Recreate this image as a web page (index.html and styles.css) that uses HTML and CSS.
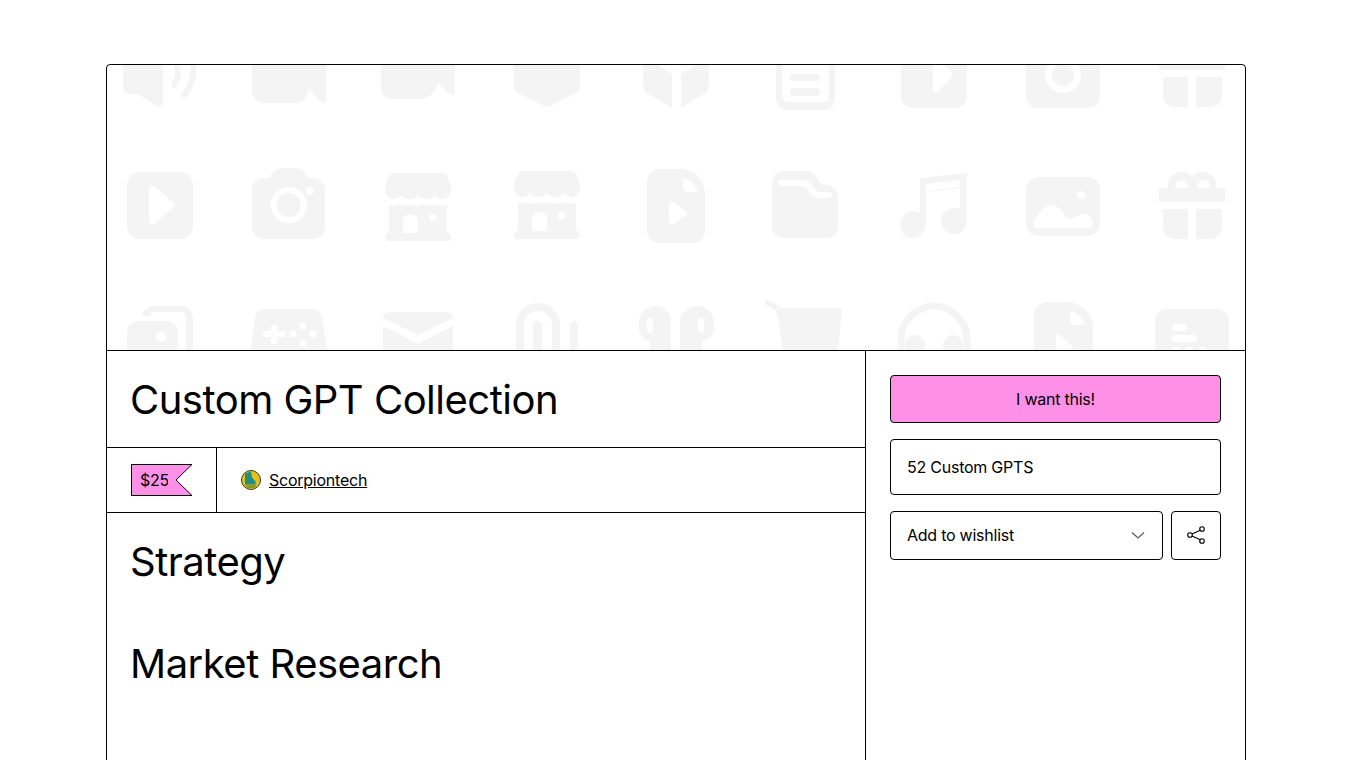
FILE: index.html
```html
<!DOCTYPE html>
<html lang="en">
<head>
    <meta charset="UTF-8">
    <meta name="viewport" content="width=device-width, initial-scale=1.0">
    <title>Custom GPT Collection</title>
    <link rel="stylesheet" href="styles.css">
</head>
<body>
    <article class="product">
        <div class="cover">
            <svg class="cover-art" viewBox="107 65 1138 285" aria-hidden="true">
                <defs>
                    <g id="gift">
                        <path d="M1168 188c-2-9 5-16 14-16 5 0 8 2 10 5 2-3 5-5 10-5 9 0 16 7 14 16h9v14h-66v-14z"/>
                        <path d="M1163 209h25v30h-13c-7 0-12-5-12-12zM1196 209h26v18c0 7-5 12-12 12h-14z"/>
                        <path class="gap" d="M1175 188c0-5 3-8 6.500-8s6.500 3 6.500 8zM1197 188c0-5 3-8 6.500-8s6.500 3 6.500 8z"/>
                    </g>
                    <g id="store">
                        <path d="M395 173h46c3 0 5 1 6 3l4 9v5c0 5-4 9-8 9-3 0-6-1-8-4-2 3-5 4-8 4s-6-1-9-4c-2 3-5 4-9 4-3 0-6-1-8-4-2 3-5 4-8 4-4 0-8-4-8-9v-5l4-9c1-2 3-3 6-3z"/>
                        <path d="M389 205c3 1 7 1 10-1 3 2 8 2 12 0 3 2 8 2 12 0 3 2 8 2 12 0 3 2 8 2 12 1v28h1c2 0 3 2 3 4s-1 4-3 4h-60c-2 0-3-2-3-4s1-4 3-4h1z"/>
                        <path class="gap" d="M403 233v-12c0-4 3-7 7.500-7s7.500 3 7.500 7v12z"/>
                        <circle class="gap" cx="432.700" cy="217.700" r="3.700"/>
                    </g>
                    <g id="camera">
                        <path d="M270 178c2-6 6-10 12-10h13c6 0 10 4 12 10h6c7 0 12 5 12 12v37c0 7-5 12-12 12h-49c-7 0-12-5-12-12v-37c0-7 5-12 12-12z"/>
                        <circle class="gap" cx="288.700" cy="205" r="18"/>
                        <circle cx="288.700" cy="205" r="12"/>
                        <circle class="gap" cx="310" cy="190.700" r="4"/>
                    </g>
                    <g id="file-play">
                        <path d="M660 169h20c14 0 25 11 25 25v37c0 7-5 12-12 12h-34c-7 0-12-5-12-12v-50c0-7 6-12 13-12z"/>
                        <path class="gap" d="M683 178c8 2 13 7 15 14h-11c-2 0-4-2-4-4z"/>
                        <path class="gap" d="M669 205c0-3 3-4 5-3l12 10c1 1 1 2 0 3l-12 9c-2 1-5 0-5-3z"/>
                    </g>
                </defs>

                <!-- row 1 -->
                <path d="M123 65h40v38c0 3-3 4-6 3l-19-12h-8c-4 0-7-3-7-7z"/>
                <path class="arc" d="M177 67c2 6 0 13-3 18M193 67c1 11-3 21-9 28"/>
                <path d="M252 65h74v35c0 3-3 4-5 2l-12-13c-2 8-7 14-14 14h-31c-7 0-12-5-12-12z"/>
                <path d="M381 65h74v28c0 2-3 3-5 1l-12-11c-2 9-9 16-19 16h-26c-7 0-12-5-12-12z"/>
                <path d="M514 65h66v22c0 3-2 5-4 6l-26 13c-2 1-4 1-6 0l-26-13c-2-1-4-3-4-6z"/>
                <path d="M643 65h14l15 9v34l-22-13c-4-2-7-5-7-10zM681 74l15-9h13v20c0 5-3 8-7 10l-21 13z"/>
                <path d="M776 65h59v33c0 7-5 12-12 12h-35c-7 0-12-5-12-12z"/>
                <path class="gap" d="M782 65h47v31c0 3-3 6-6 6h-35c-3 0-6-3-6-6z"/>
                <rect x="790" y="74" width="30" height="7" rx="3.500"/>
                <rect x="790" y="88" width="30" height="8" rx="4"/>
                <path d="M901 65h66v31c0 7-5 12-12 12h-42c-7 0-12-5-12-12z"/>
                <path class="gap" d="M933 65v25c0 3 2 4 4 2l15-15c1-1 1-3 0-4l-8-8z"/>
                <path d="M1026 65h74v31c0 7-5 12-12 12h-50c-7 0-12-5-12-12z"/>
                <circle class="gap" cx="1063" cy="75" r="18"/>
                <circle cx="1063" cy="75" r="11"/>
                <use href="#gift" y="-132"/>

                <!-- row 2 -->
                <rect x="127" y="172" width="66" height="67" rx="13"/>
                <path class="gap" d="M149 190c0-4 3-5 6-3l19 16c1 1 1 3 0 4l-19 16c-3 2-6 1-6-3z"/>
                <use href="#camera"/>
                <use href="#store"/>
                <use href="#store" x="129" y="-2"/>
                <use href="#file-play"/>
                <path d="M772 183c0-7 5-12 12-12h22c6 0 9 3 11 7 2 4 4 7 9 7 7 0 12 5 12 12v29c0 7-5 12-12 12h-42c-7 0-12-5-12-12z"/>
                <path class="line" d="M781 183h21c5 0 7 3 9 6 2 4 5 6 9 6h9"/>
                <path d="M920 178l47-5v48c0 7-6 13-13 13s-13-6-13-13 6-13 13-13c2 0 4 0 6 1v-21l-34 4v32c0 7-6 14-13 14s-13-6-13-13 6-14 13-14c2 0 4 0 7 2z"/>
                <path class="gap" d="M926 184l34-4v7l-34 4z"/>
                <rect x="1026" y="177" width="74" height="59" rx="13"/>
                <path class="gap" d="M1034 222c3-7 10-17 18-17 6 0 9 5 13 11 2 3 5 4 8 2l6-3c5-2 11-1 13 5 1 4 0 8-4 8h-52c-2 0-3-4-2-6z"/>
                <circle class="gap" cx="1081" cy="195" r="4"/>
                <use href="#gift"/>

                <!-- row 3 -->
                <path d="M155 306h26c7 0 12 5 12 12v35h-7v-36c0-3-2-5-5-5h-26c-3 0-5 1-5 4h-8c0-5 6-10 13-10z"/>
                <path d="M139 321h27c7 0 12 5 12 12v20h-51v-20c0-7 5-12 12-12z"/>
                <circle class="gap" cx="161" cy="337" r="5"/>
                <path d="M265 309h46c6 0 10 3 11 9l6 35h-78l5-35c1-6 5-9 10-9z"/>
                <path class="gap" d="M271 325h6v6h8v6h-8v7h-6v-7h-8v-6h8z"/>
                <circle class="gap" cx="303" cy="326" r="3.500"/>
                <circle class="gap" cx="293" cy="334" r="3.500"/>
                <circle class="gap" cx="313" cy="334" r="3.500"/>
                <circle class="gap" cx="303" cy="343" r="3.500"/>
                <path d="M393 312h50c6 0 10 2 10 6l-35 17-35-17c0-4 4-6 10-6z"/>
                <path d="M383 326l35 18 35-18v27h-70z"/>
                <path class="arc wide clip" d="M520 353v-28c0-10 8-18 18-18s18 8 18 18v28"/>
                <path d="M533 353v-27c0-3 2-5 4.500-5s4.500 2 4.500 5v27zM570 353v-27c0-3 2-5 4-5s4 2 4 5v27z"/>
                <path d="M656 306c9 0 15 7 15 16v31h-21v-12c-6-1-11-6-11-13v-6c0-9 8-16 17-16zM697 306c9 0 17 7 17 16v6c0 7-6 12-12 13v12h-22v-31c0-9 8-16 17-16z"/>
                <rect class="gap" x="647" y="318" width="6" height="15" rx="3"/>
                <rect class="gap" x="698" y="318" width="6" height="15" rx="3"/>
                <path d="M768 300l8 4c2 1 3 3 4 4h62l-4 45h-55l-5-36c-1-4-3-7-6-9l-6-3c-3-2 0-6 2-5z"/>
                <path class="arc wide" d="M901 353v-14c0-18 16-33 33-33s33 15 33 33v14"/>
                <ellipse cx="915" cy="345" rx="10" ry="10"/>
                <ellipse cx="953" cy="345" rx="10" ry="10"/>
                <path d="M1047 302h19c14 0 27 11 27 25v26h-59v-38c0-7 6-13 13-13z"/>
                <path class="gap" d="M1070 311c8 2 13 7 15 14h-11c-2 0-4-2-4-4z"/>
                <path class="gap" d="M1056 335c2-1 4 0 5 1l11 10c1 1 1 2 0 3l-5 4h-11z"/>
                <path d="M1167 309h50c7 0 12 5 12 12v32h-74v-32c0-7 5-12 12-12z"/>
                <rect class="gap" x="1172" y="324" width="15" height="7" rx="3.500"/>
                <rect class="gap" x="1172" y="335" width="25" height="7" rx="3.500"/>
                <circle class="gap" cx="1176" cy="351" r="4"/>
                <circle class="gap" cx="1189" cy="351" r="4"/>
                <circle class="gap" cx="1202" cy="351" r="4"/>
            </svg>
        </div>

        <div class="details">
            <section class="info">
                <h1 class="product-title">Custom GPT Collection</h1>
                <div class="meta">
                    <div class="meta-price">
                        <div class="price-tag">
                            <span class="price-amount">$25</span>
                            <svg class="price-notch" width="24" height="32" viewBox="0 0 24 32" aria-hidden="true">
                                <path class="notch-fill" d="M0 0.500h24l-16 15.500 16 15.500h-24z"/>
                                <path class="notch-line" d="M0 0.500h24l-16 15.500 16 15.500h-24"/>
                            </svg>
                        </div>
                    </div>
                    <div class="meta-seller">
                        <svg class="avatar" width="20" height="20" viewBox="0 0 20 20" aria-hidden="true">
                            <circle cx="10" cy="10" r="9.500" fill="#e8c21c" stroke="#3a3a22"/>
                            <path d="M4 3.500l6-2 1 6 4 4.500-1 2.500H4z" fill="#1f8f85"/>
                            <path d="M3.500 14.500h12.500l-2.500 3.500h-7z" fill="#8a9a2a"/>
                        </svg>
                        <a class="seller-link" href="#">Scorpiontech</a>
                    </div>
                </div>
                <div class="description">
                    <h2 class="section-heading">Strategy</h2>
                    <h2 class="section-heading">Market Research</h2>
                </div>
            </section>

            <aside class="purchase">
                <a class="buy-button" href="#">I want this!</a>
                <div class="variant-box">52 Custom GPTS</div>
                <div class="wishlist-row">
                    <div class="wishlist-select">
                        <span>Add to wishlist</span>
                        <svg width="14" height="8" viewBox="0 0 14 8" aria-hidden="true">
                            <path class="icon-line chevron" d="M1 1.500l6 5.500 6-5.500"/>
                        </svg>
                    </div>
                    <button class="share-button" type="button" aria-label="Share">
                        <svg width="18" height="18" viewBox="0 0 18 18" aria-hidden="true">
                            <path class="icon-line" d="M13.900 4.100L5 8M5 10l8.900 3.900"/>
                            <circle class="icon-line" cx="3" cy="9" r="2.300"/>
                            <circle class="icon-line" cx="15" cy="3" r="2.300"/>
                            <circle class="icon-line" cx="15" cy="15" r="2.300"/>
                        </svg>
                    </button>
                </div>
            </aside>
        </div>
    </article>
</body>
</html>
```

FILE: styles.css
```css
* {
    box-sizing: border-box;
}
html,
body {
    height: 100%;
    overflow: hidden;
}
body {
    margin: 0;
    padding: 64px 106px 0;
    background-color: #ffffff;
    color: #000000;
    font-family: 'Inter', 'Liberation Sans', Arial, sans-serif;
    font-size: 16px;
    line-height: 24px;
    letter-spacing: -0.24px;
}
a {
    color: inherit;
}

.product {
    min-height: 800px;
    border: 1px solid #000000;
    border-radius: 4px;
    overflow: hidden;
}

/* cover pattern */
.cover {
    height: 286px;
    border-bottom: 1px solid #000000;
}
.cover-art {
    display: block;
    width: 100%;
    height: 285px;
    fill: #f4f4f4;
}
.cover-art .gap {
    fill: #ffffff;
}
.cover-art .arc {
    fill: none;
    stroke: #f4f4f4;
    stroke-width: 6;
    stroke-linecap: round;
}
.cover-art .wide {
    stroke-width: 7;
    stroke-linecap: butt;
}
.cover-art .clip {
    stroke-width: 8;
}
.cover-art .line {
    fill: none;
    stroke: #ffffff;
    stroke-width: 6;
    stroke-linecap: round;
}

.details {
    display: grid;
    grid-template-columns: 1fr 380px;
}

/* left column */
.product-title {
    margin: 0;
    padding: 25px 24px 23px 23px;
    font-size: 40px;
    line-height: 48px;
    font-weight: 400;
    letter-spacing: -0.5px;
    border-bottom: 1px solid #000000;
}
.meta {
    display: flex;
    height: 65px;
    border-bottom: 1px solid #000000;
}
.meta-price {
    display: flex;
    align-items: center;
    padding: 0 24px;
    border-right: 1px solid #000000;
}
.price-tag {
    display: flex;
    height: 32px;
}
.price-amount {
    width: 37px;
    padding-left: 8px;
    background-color: #ff90e8;
    border: 1px solid #000000;
    border-right: none;
    line-height: 30px;
}
.price-notch {
    display: block;
}
.notch-fill {
    fill: #ff90e8;
}
.notch-line {
    fill: none;
    stroke: #000000;
}
.meta-seller {
    display: flex;
    align-items: center;
    gap: 8px;
    padding: 0 24px;
}
.avatar {
    display: block;
}
.description {
    padding: 25px 24px 24px 23px;
}
.section-heading {
    margin: 0 0 54px;
    font-size: 40px;
    line-height: 48px;
    font-weight: 400;
    letter-spacing: -0.5px;
}

/* right column */
.purchase {
    display: flex;
    flex-direction: column;
    gap: 16px;
    padding: 24px;
    border-left: 1px solid #000000;
}
.buy-button {
    display: block;
    height: 48px;
    line-height: 46px;
    text-align: center;
    text-decoration: none;
    background-color: #ff90e8;
    border: 1px solid #000000;
    border-radius: 4px;
}
.variant-box {
    height: 56px;
    padding: 0 16px;
    line-height: 54px;
    border: 1px solid #000000;
    border-radius: 4px;
}
.wishlist-row {
    display: flex;
    gap: 8px;
}
.wishlist-select {
    flex: 1;
    display: flex;
    align-items: center;
    justify-content: space-between;
    height: 49px;
    padding: 0 17px 2px 16px;
    border: 1px solid #000000;
    border-radius: 4px;
}
.share-button {
    display: flex;
    align-items: center;
    justify-content: center;
    width: 50px;
    height: 49px;
    padding: 0 0 2px;
    background: none;
    border: 1px solid #000000;
    border-radius: 4px;
}
.icon-line {
    fill: none;
    stroke: #000000;
    stroke-width: 1.100;
}
.chevron {
    stroke: #555555;
}
```
